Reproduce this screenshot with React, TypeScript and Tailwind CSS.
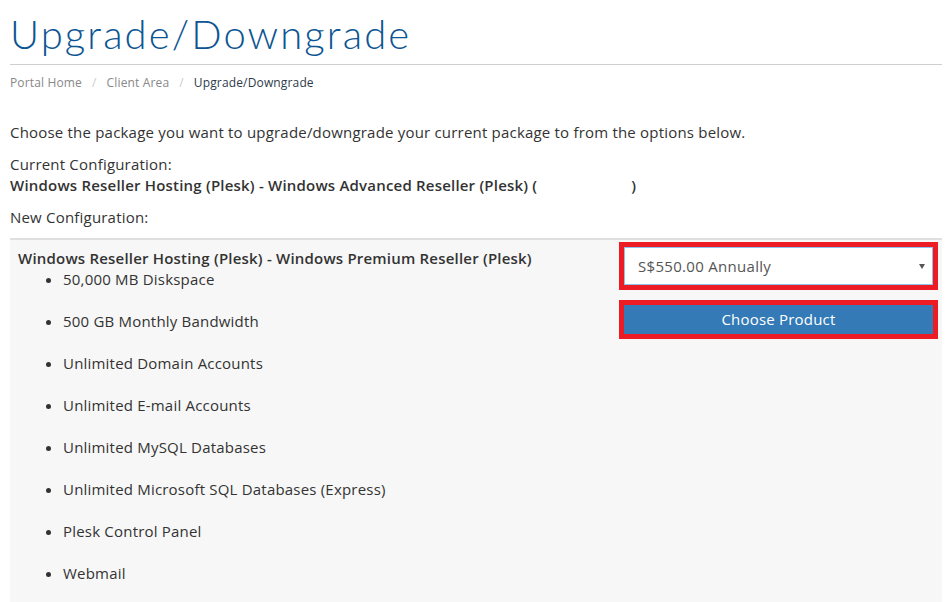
import React from "react";

const features = [
  "50,000 MB Diskspace",
  "500 GB Monthly Bandwidth",
  "Unlimited Domain Accounts",
  "Unlimited E-mail Accounts",
  "Unlimited MySQL Databases",
  "Unlimited Microsoft SQL Databases (Express)",
  "Plesk Control Panel",
  "Webmail",
];

export default function App() {
  return (
    <div
      className="min-h-[602px] bg-white pl-[10px] pr-[6px] text-[15px] leading-[21px] tracking-[0.2px] text-[#333]"
      style={{ fontFamily: '"Open Sans", "Liberation Sans", sans-serif' }}
    >
      <h1
        className="pt-[13px] pb-[9px] text-[40px] leading-[42px] font-light text-[#0c5592] tracking-[2.1px]"
        style={{ fontFamily: 'Lato, "Open Sans", sans-serif' }}
      >
        Upgrade/Downgrade
      </h1>
      <div className="h-px bg-[#cfcfcf]" />
      <nav className="mt-[9px] flex items-center text-[12px] leading-[17px] tracking-[0.15px]">
        <span className="text-[#888]">Portal Home</span>
        <span className="px-[10px] text-[#ccc]">/</span>
        <span className="text-[#888]">Client Area</span>
        <span className="px-[10px] text-[#ccc]">/</span>
        <span className="text-[#2d3b4c]">Upgrade/Downgrade</span>
      </nav>
      <p className="mt-[31px]">
        Choose the package you want to upgrade/downgrade your current package to from the options below.
      </p>
      <p className="mt-[11px]">Current Configuration:</p>
      <p className="font-semibold">
        Windows Reseller Hosting (Plesk) - Windows Advanced Reseller (Plesk) (
        <span className="inline-block w-[94px]" />)
      </p>
      <p className="mt-[11px]">New Configuration:</p>
      <div className="mt-[10px] flex border-t-2 border-[#dfdfdf] bg-[#f7f7f7] p-[8px]">
        <div className="flex-1">
          <div className="font-semibold">
            Windows Reseller Hosting (Plesk) - Windows Premium Reseller (Plesk)
          </div>
          <ul className="list-disc pl-[45px]">
            {features.map((f) => (
              <li key={f} className="pb-[21px]">
                {f}
              </li>
            ))}
          </ul>
        </div>
        <div className="-mt-[1px] mr-[1px] w-[309px]">
          <div className="outline-[length:5px] outline-solid outline-[#ed1c24]">
            <div className="flex h-[38px] items-center justify-between border border-[#8fc1ea] bg-white pl-[13px] pr-[7px] text-[15px] tracking-[0.3px] text-[#555]">
              <span>S$550.00 Annually</span>
              <svg width="6" height="5" viewBox="0 0 6 5">
                <path d="M0 0H6L3 5Z" fill="#555" />
              </svg>
            </div>
          </div>
          <div className="mt-[20px] outline-[length:5px] outline-solid outline-[#ed1c24]">
            <button className="flex h-[29px] w-full items-center justify-center bg-[#337ab7] text-[15px] tracking-[0.2px] text-white">
              Choose Product
            </button>
          </div>
        </div>
      </div>
    </div>
  );
}
